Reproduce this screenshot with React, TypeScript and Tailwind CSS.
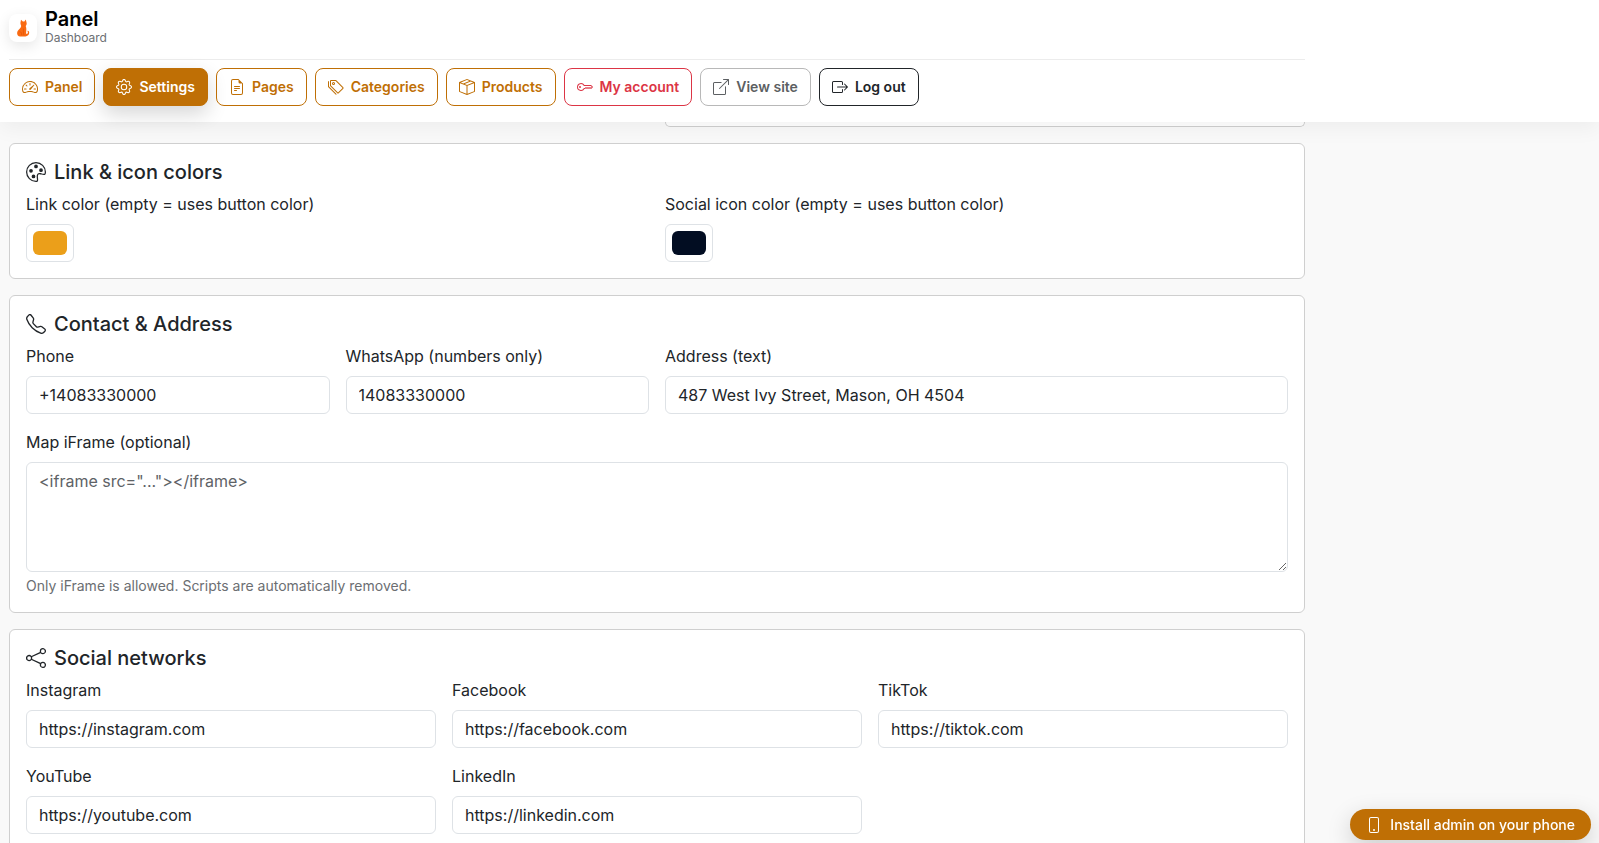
import { useId } from "react";
import type { ReactNode } from "react";
import type { IconType } from "react-icons";
import {
  BsBoxArrowRight,
  BsBoxArrowUpRight,
  BsBoxSeam,
  BsFileEarmarkText,
  BsGear,
  BsKey,
  BsPalette,
  BsPhone,
  BsShare,
  BsSpeedometer2,
  BsTags,
  BsTelephone,
} from "react-icons/bs";
import clsx from "clsx";

const variants = {
  brand: "border-[#bf6f05] text-[#bf6f05]",
  active:
    "border-[#bf6f05] bg-[#bf6f05] text-white shadow-[0_8px_20px_rgba(0,0,0,0.16)]",
  danger: "border-[#dc3545] text-[#dc3545]",
  muted: "border-[#b8b8b8] text-[#5c5f62]",
  dark: "border-[#212529] text-[#212529]",
};

const navItems: {
  label: string;
  icon: IconType;
  variant: keyof typeof variants;
}[] = [
  { label: "Panel", icon: BsSpeedometer2, variant: "brand" },
  { label: "Settings", icon: BsGear, variant: "active" },
  { label: "Pages", icon: BsFileEarmarkText, variant: "brand" },
  { label: "Categories", icon: BsTags, variant: "brand" },
  { label: "Products", icon: BsBoxSeam, variant: "brand" },
  { label: "My account", icon: BsKey, variant: "danger" },
  { label: "View site", icon: BsBoxArrowUpRight, variant: "muted" },
  { label: "Log out", icon: BsBoxArrowRight, variant: "dark" },
];

const socials = [
  { label: "Instagram", url: "https://instagram.com" },
  { label: "Facebook", url: "https://facebook.com" },
  { label: "TikTok", url: "https://tiktok.com" },
  { label: "YouTube", url: "https://youtube.com" },
  { label: "LinkedIn", url: "https://linkedin.com" },
];

function CatLogo() {
  return (
    <svg viewBox="0 0 14 18" className="h-[18px] w-[14px]" aria-hidden="true">
      <path
        fill="#f96a12"
        d="M5 .8 6.800 2.400H8.400L9.800.6 10.600 3.800C10.900 5.200 10.500 6.200 9.700 6.900 10.400 8.500 10.500 10.500 10.200 12.500L10 14.700C11.200 14.900 12 14.400 11.900 13.500 11.800 12.800 11.400 12.400 11.500 11.800 12.400 11.500 13.200 12.500 13.200 13.800 13.100 15.900 11.600 17.400 9.400 17.400H4.200C2.200 17.400 1 16 1.100 14 1.200 11.300 3.500 10.300 4.700 8.400 5.200 7.600 5.300 6.900 5 6.200 4.300 5 4.400 3.600 4.700 2.600z"
      />
      <path
        fill="none"
        stroke="#dd4f05"
        strokeWidth=".6"
        d="M7.700 9.500c-.5 2.400-.4 4.600.3 6.800M3.600 12.600c1.500.2 2.300 1.600 2.100 3.700"
      />
    </svg>
  );
}

function Header() {
  return (
    <header className="relative z-10 bg-white px-[9px] shadow-[0_6px_20px_rgba(0,0,0,0.05)]">
      <div className="max-w-[1296px]">
        <div className="flex h-[60px] items-center gap-2 border-b border-[#ececec] pb-1">
          <span className="flex size-7 items-center justify-center rounded-lg bg-white shadow-[0_4px_14px_rgba(0,0,0,0.10)]">
            <CatLogo />
          </span>
          <div>
            <div className="text-xl leading-5 font-semibold text-black">
              Panel
            </div>
            <div className="text-xs leading-[18px] text-[#6c6f73]">
              Dashboard
            </div>
          </div>
        </div>
        <nav className="flex flex-wrap gap-2 pt-2 pb-4">
          {navItems.map(({ label, icon: Icon, variant }) => (
            <a
              key={label}
              href="#"
              className={clsx(
                "flex h-[38px] items-center gap-[7px] rounded-lg border px-3 text-sm font-semibold",
                variants[variant],
              )}
            >
              <Icon size={16} />
              {label}
            </a>
          ))}
        </nav>
      </div>
    </header>
  );
}

function Card({
  title,
  icon: Icon,
  children,
}: {
  title: string;
  icon: IconType;
  children: ReactNode;
}) {
  return (
    <section className="rounded-md border border-[#cfcfcf] bg-white p-4">
      <h5 className="mb-2 flex items-center gap-2 text-xl leading-6 font-medium">
        <Icon size={20} />
        {title}
      </h5>
      {children}
    </section>
  );
}

function TextField({
  label,
  value,
  className,
}: {
  label: string;
  value: string;
  className?: string;
}) {
  const id = useId();
  return (
    <div className={className}>
      <label htmlFor={id} className="mb-2 block">
        {label}
      </label>
      <input
        id={id}
        type="text"
        defaultValue={value}
        className="block h-[38px] w-full rounded-md border border-[#dee2e6] bg-white px-3"
      />
    </div>
  );
}

function ColorField({ label, value }: { label: string; value: string }) {
  const id = useId();
  return (
    <div>
      <label htmlFor={id} className="mb-2 block">
        {label}
      </label>
      <input
        id={id}
        type="color"
        defaultValue={value}
        className="block h-[38px] w-12 rounded-md border border-[#dee2e6] bg-white p-1.5 [&::-webkit-color-swatch]:rounded-md [&::-webkit-color-swatch]:border-0 [&::-webkit-color-swatch-wrapper]:p-0"
      />
    </div>
  );
}

export default function App() {
  return (
    <div className="h-screen overflow-hidden bg-[#f9f9f9] font-[Inter,sans-serif] text-base text-[#212529]">
      <Header />

      <main className="px-[9px]">
        <div className="flex max-w-[1296px] flex-col gap-4">
          <div className="grid grid-cols-2 gap-4">
            <div className="col-start-2 h-[5px] rounded-b-md border border-t-0 border-[#cfcfcf] bg-white" />
          </div>

          <Card title="Link & icon colors" icon={BsPalette}>
            <div className="grid grid-cols-2 gap-4">
              <ColorField
                label="Link color (empty = uses button color)"
                value="#eb9f1a"
              />
              <ColorField
                label="Social icon color (empty = uses button color)"
                value="#020d22"
              />
            </div>
          </Card>

          <Card title="Contact & Address" icon={BsTelephone}>
            <div className="grid grid-cols-4 gap-4">
              <TextField label="Phone" value="+14083330000" />
              <TextField label="WhatsApp (numbers only)" value="14083330000" />
              <TextField
                label="Address (text)"
                value="487 West Ivy Street, Mason, OH 4504"
                className="col-span-2"
              />
              <div className="col-span-4">
                <label htmlFor="map" className="mb-2 block">
                  Map iFrame (optional)
                </label>
                <textarea
                  id="map"
                  rows={4}
                  placeholder={'<iframe src="..."></iframe>'}
                  className="block w-full resize-y rounded-md border border-[#dee2e6] bg-white px-3 py-1.5 placeholder:text-[#5e6266]"
                />
                <p className="mt-1 text-sm text-[#6b6e72]">
                  Only iFrame is allowed. Scripts are automatically removed.
                </p>
              </div>
            </div>
          </Card>

          <Card title="Social networks" icon={BsShare}>
            <div className="grid grid-cols-3 gap-4">
              {socials.map((social) => (
                <TextField
                  key={social.label}
                  label={social.label}
                  value={social.url}
                />
              ))}
            </div>
          </Card>
        </div>
      </main>

      <button
        type="button"
        className="fixed right-2 bottom-[3px] z-20 flex h-[31px] items-center gap-2 rounded-full bg-[#bf6f05] px-4 text-sm font-medium text-white shadow-[0_8px_24px_rgba(0,0,0,0.18)]"
      >
        <BsPhone size={16} />
        Install admin on your phone
      </button>
    </div>
  );
}
